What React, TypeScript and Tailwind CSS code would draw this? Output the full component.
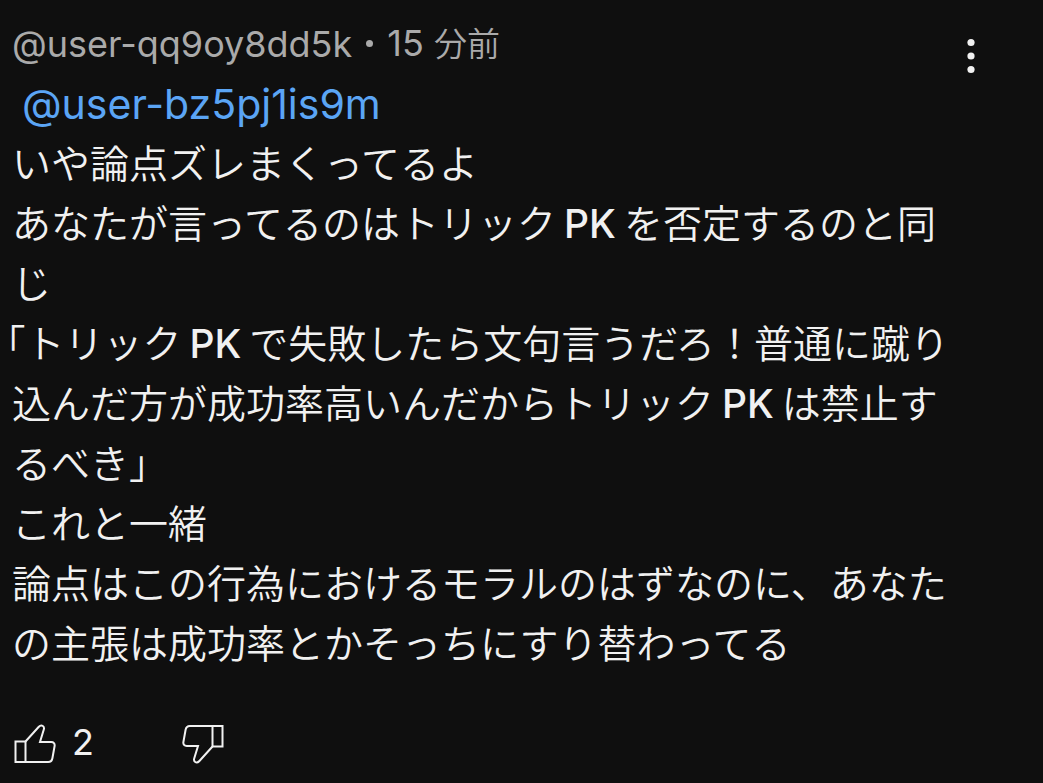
import React from "react";

const paragraphs = [
  "いや論点ズレまくってるよ",
  "あなたが言ってるのはトリックPKを否定するのと同じ",
  "「トリックPKで失敗したら文句言うだろ！普通に蹴り込んだ方が成功率高いんだからトリックPKは禁止するべき」",
  "これと一緒",
  "論点はこの行為におけるモラルのはずなのに、あなたの主張は成功率とかそっちにすり替わってる",
];

function Paragraph({ text }: { text: string }) {
  const hanging = text.startsWith("「");
  return (
    <p className={`[text-spacing-trim:trim-start] ${hanging ? "-indent-1.5" : ""}`}>
      {text.split(/([A-Z]+)/).map((part, i) =>
        i % 2 === 1 ? (
          <span key={i} className="mx-2 font-[450]">{part}</span>
        ) : (
          part
        ),
      )}
    </p>
  );
}

function ThumbIcon({ down = false }: { down?: boolean }) {
  return (
    <svg
      viewBox="0 0 42 40"
      aria-hidden="true"
      className={`h-10 w-[42px] fill-none stroke-current stroke-2 ${down ? "rotate-180" : ""}`}
    >
      <path d="M1.5 17.5H11.5V38H1.5Z" />
      <path d="M11.5 17.5L24.6 3C26 1.5 27.6 1.2 28.8 2C30 2.8 30.2 4.2 29.8 5.6L26 18H37.2C39.6 18 41 19.6 40.6 22L38.4 34.2C37.9 36.8 36.6 38 34.2 38H11.5" />
    </svg>
  );
}

export default function App() {
  return (
    <main
      lang="ja"
      className="min-h-screen bg-[#0f0f0f] pt-3 pl-3 font-['Inter','Noto_Sans_CJK_JP',sans-serif] text-[#f1f1f1]"
    >
      <article>
        <header className="-mb-0.5 flex items-start justify-between pr-14">
          <p className="flex items-center gap-3.5 text-[36px] leading-[62px] text-[#aaaaaa]">
            <span>@user-qq9oy8dd5k</span>
            <span aria-hidden="true" className="size-[7px] rounded-full bg-[#aaaaaa]" />
            <span>
              15 <span className="text-[33px] font-[350]">分前</span>
            </span>
          </p>
          <button type="button" aria-label="メニュー" className="mt-6 flex h-10 w-8 items-center justify-center">
            <svg viewBox="0 0 8 36" aria-hidden="true" className="h-9 w-2 fill-current">
              <circle cx="4" cy="4.5" r="3.6" />
              <circle cx="4" cy="18" r="3.6" />
              <circle cx="4" cy="31.5" r="3.6" />
            </svg>
          </button>
        </header>
        <div className="pr-20 text-[39px] leading-[60px] font-[350]">
          <a href="#user" className="block pl-2.5 text-[41px] font-normal text-[#5ba5f5]">
            @user-bz5pj1is9m
          </a>
          {paragraphs.map((text) => (
            <Paragraph key={text} text={text} />
          ))}
        </div>
        <footer className="mt-[38px] flex items-center gap-[88px] pl-0.5">
          <button type="button" aria-label="高く評価 2" className="flex items-center gap-4 text-[36px] leading-[60px]">
            <ThumbIcon />
            <span className="pb-1">2</span>
          </button>
          <button type="button" aria-label="低く評価">
            <ThumbIcon down />
          </button>
        </footer>
      </article>
    </main>
  );
}
